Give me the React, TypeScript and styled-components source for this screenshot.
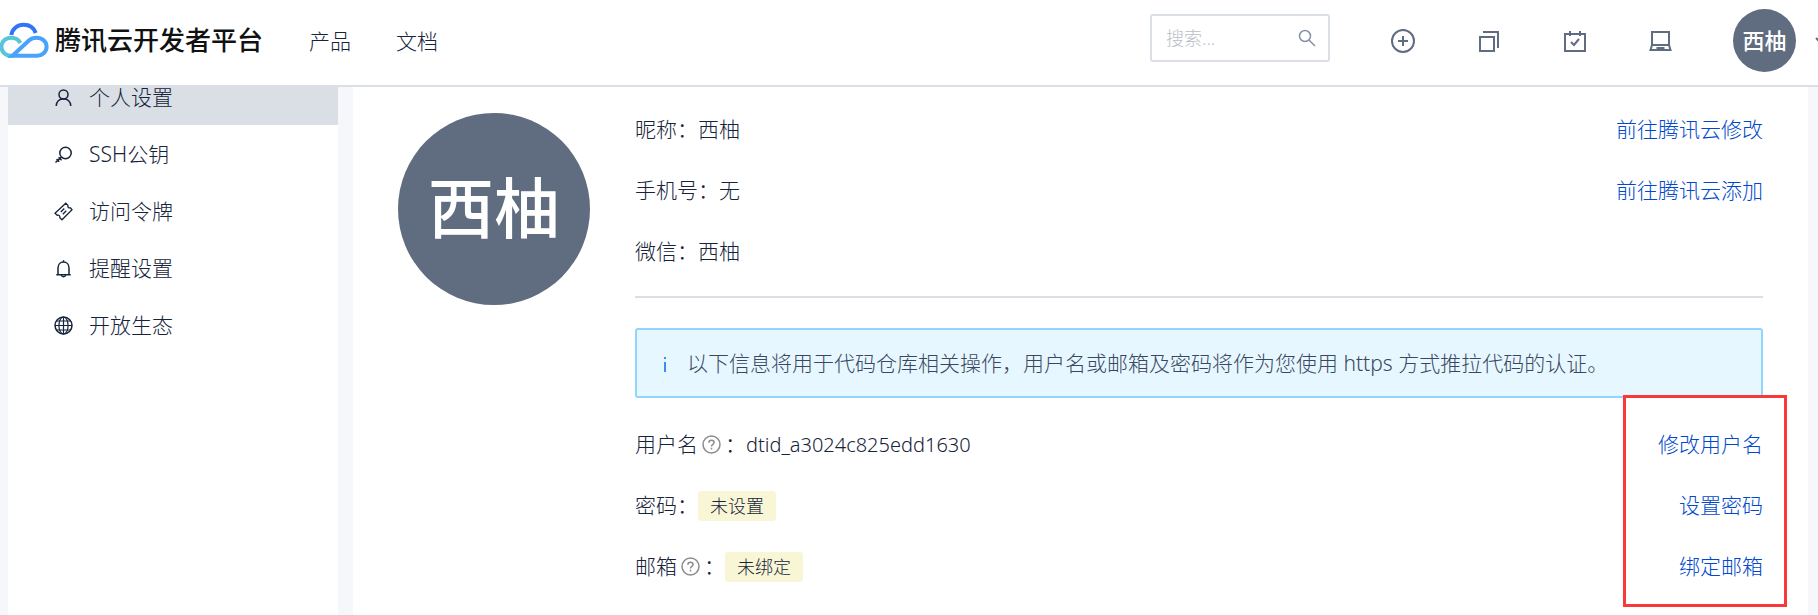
import React from 'react';
import styled, { createGlobalStyle } from 'styled-components';

const INK = '#16233a';
const SLATE = '#606c80';
const LINE = '#dadfe6';

const GlobalStyle = createGlobalStyle`
  *, *::before, *::after { box-sizing: border-box; }
  body {
    margin: 0;
    background: #f6f7fb;
    color: ${INK};
    font: 300 21px/31px "Noto Sans", "Noto Sans CJK SC", sans-serif;
    overflow-x: hidden;
  }
`;

const Header = styled.header`
  position: fixed;
  inset: 0 0 auto 0;
  z-index: 10;
  display: flex;
  align-items: center;
  height: 87px;
  padding-bottom: 4px;
  background: #fff;
  border-bottom: 2px solid ${LINE};
  overflow: hidden;
`;

const Brand = styled.a`
  display: flex;
  align-items: center;
  gap: 6px;
  color: #111;
  font-size: 26px;
  font-weight: 500;
  text-decoration: none;
  white-space: nowrap;
`;

const Nav = styled.nav`
  display: flex;
  gap: 45px;
  margin-left: 46px;
  padding-top: 2px;
`;

const NavLink = styled.a`
  color: ${INK};
  text-decoration: none;
  white-space: nowrap;
`;

const SearchBox = styled.label`
  display: flex;
  align-items: center;
  width: 180px;
  height: 48px;
  margin: 0 60px 5px auto;
  padding: 0 12px 0 14px;
  border: 2px solid ${LINE};
  border-radius: 3px;
  color: #8592a6;
`;

const SearchInput = styled.input`
  flex: 1;
  min-width: 0;
  padding: 0;
  border: 0;
  outline: 0;
  background: none;
  color: ${INK};
  font: inherit;
  font-size: 18px;
  &::placeholder { color: #b9bec8; opacity: 1; }
`;

const Tools = styled.div`
  display: flex;
  align-items: center;
  gap: 60px;
`;

const IconButton = styled.button`
  display: flex;
  padding: 0;
  border: 0;
  background: none;
  color: ${SLATE};
  cursor: pointer;
`;

const AccountButton = styled(IconButton)`
  align-items: center;
  gap: 18px;
  margin: 0 -13px 0 59px;
`;

const Avatar = styled.span<{ $size: number; $text: number }>`
  display: flex;
  flex: none;
  align-items: center;
  justify-content: center;
  width: ${p => p.$size}px;
  height: ${p => p.$size}px;
  padding-bottom: ${p => Math.round(p.$size / 20)}px;
  border-radius: 50%;
  background: ${SLATE};
  color: #fff;
  font: 500 ${p => p.$text}px/1 "Noto Sans CJK SC", sans-serif;
`;

const Page = styled.div`
  display: flex;
  align-items: stretch;
  gap: 15px;
  min-height: 100vh;
  padding: 68px 10px 0 8px;
`;

const Sidebar = styled.nav`
  flex: none;
  width: 330px;
  background: #fff;
`;

const SideLink = styled.a<{ $active?: boolean }>`
  display: flex;
  align-items: center;
  gap: 16px;
  height: 57px;
  padding: 2px 0 0 46px;
  background: ${p => (p.$active ? LINE : 'transparent')};
  color: ${INK};
  text-decoration: none;
`;

const Main = styled.main`
  display: flex;
  flex: 1;
  align-items: flex-start;
  gap: 45px;
  min-width: 0;
  padding: 45px 45px 0;
  background: #fff;
`;

const Details = styled.div`
  display: flex;
  flex: 1;
  flex-direction: column;
  gap: 30px;
  min-width: 0;
`;

const RowGroup = styled.section`
  position: relative;
  display: flex;
  flex-direction: column;
  gap: 30px;
`;

const Row = styled.div`
  display: flex;
  align-items: center;
  height: 31px;
  padding-top: 2px;
  white-space: nowrap;
`;

const RowLink = styled.a`
  margin-left: auto;
  color: #0048cc;
  text-decoration: none;
`;

const Username = styled.span`
  font-size: 20px;
`;

const HelpButton = styled(IconButton)`
  margin: 0 4px;
  color: #8c8c8c;
`;

const Tag = styled.span`
  padding: 0 12px;
  border-radius: 3px;
  background: #f9f6d6;
  font-size: 18px;
  line-height: 30px;
`;

const Divider = styled.hr`
  width: 100%;
  height: 2px;
  margin: 0;
  border: 0;
  background: ${LINE};
`;

const Notice = styled.div`
  display: flex;
  align-items: center;
  gap: 14px;
  min-height: 70px;
  padding: 0 20px;
  border: 2px solid #91d5ff;
  border-radius: 3px;
  background: #e6f7ff;
  color: #3b475f;
`;

const Highlight = styled.div`
  position: absolute;
  top: -33px;
  right: -24px;
  bottom: -26px;
  width: 164px;
  border: 3px solid #fb3838;
  pointer-events: none;
`;

type IconProps = { size: number; width?: number; children: React.ReactNode };

const Icon = ({ size, width = 1.5, children }: IconProps) => (
  <svg width={size} height={size} viewBox={`0 0 ${size} ${size}`} fill="none" stroke="currentColor" strokeWidth={width} aria-hidden="true">
    {children}
  </svg>
);

const Logo = () => (
  <svg width="49" height="37" viewBox="0 0 49 37" fill="none" strokeWidth="4" aria-hidden="true">
    <path stroke="#2f74fb" d="M11.300 13C12.300 6.600 17.500 2.700 23.700 2.700c5.800 0 10.200 3 12 8.300" />
    <path stroke="#5ac4d8" d="M20.500 21C18.500 17.500 15 15.700 11.300 15.700 5.600 15.700 1.400 19.700 1.400 24.800c0 5.200 4.300 9 9.600 9h3" />
    <path stroke="#4aa2fb" d="M12.500 33.800 29.200 18.200c2-1.900 4.600-2.500 7.300-2.500 5.700 0 10.100 4 10.100 9.100 0 5.200-4.400 9-9.600 9Z" />
  </svg>
);

const Help = () => (
  <HelpButton type="button" aria-label="帮助">
    <Icon size={19}>
      <circle cx="9.500" cy="9.500" r="8.500" />
      <path d="M6.900 7.700c0-1.600 1.100-2.500 2.600-2.500s2.600.9 2.600 2.300c0 2-2.600 1.900-2.600 4M9.500 12.800v1.600" />
    </Icon>
  </HelpButton>
);

const sideItems = [
  {
    label: '个人设置',
    icon: <><circle cx="9.500" cy="6.500" r="4.500" /><path d="M2.200 18c0-4.300 3.200-7.200 7.300-7.200s7.300 2.900 7.300 7.200" /></>,
  },
  {
    label: 'SSH公钥',
    icon: <><circle cx="11.500" cy="8" r="5.700" /><path d="M7.400 12.100 1.500 17.500M4.600 12.200l3 3M2.600 14.100l2.600 2.600" /></>,
  },
  {
    label: '访问令牌',
    icon: <path strokeWidth="1.300" d="M11.800 1.200 14 3.400c-.6 1.800.6 3 2.400 2.400l1.600 2L8 17.800l-2.200-2c.5-1.800-.8-3.100-2.600-2.500L1 11.200ZM6.800 10l3.500-3.500M8.800 12.300l3.500-3.500" />,
  },
  {
    label: '提醒设置',
    icon: <path d="M9.500 1.300V3M4 15.500V9c0-3.500 2.300-6 5.500-6s5.500 2.500 5.500 6v6.500M2.300 15.800h14.400M7.300 16c.4 2.400 4 2.400 4.400 0" />,
  },
  {
    label: '开放生态',
    icon: (
      <g strokeWidth="1.200">
        <circle cx="9.500" cy="9.500" r="8.500" strokeWidth="1.500" />
        <ellipse cx="9.500" cy="9.500" rx="4.600" ry="8.500" />
        <path d="M9.500 1v17M1 9.500h17M2.800 5h13.400M2.800 14h13.400" />
      </g>
    ),
  },
];

export default function App() {
  return (
    <>
      <GlobalStyle />
      <Header>
        <Brand href="#"><Logo />腾讯云开发者平台</Brand>
        <Nav>
          <NavLink href="#">产品</NavLink>
          <NavLink href="#">文档</NavLink>
        </Nav>
        <SearchBox>
          <SearchInput type="text" placeholder="搜索..." aria-label="搜索" />
          <Icon size={18}><circle cx="7" cy="7" r="5.500" /><path d="m11 11 6 6" /></Icon>
        </SearchBox>
        <Tools>
          <IconButton type="button" aria-label="新建">
            <Icon size={26} width={2}><circle cx="13" cy="13" r="11" /><path d="M13 8v10M8 13h10" /></Icon>
          </IconButton>
          <IconButton type="button" aria-label="项目">
            <Icon size={26} width={2}><path d="M4 9h14v14H4ZM7 4h15v16" /></Icon>
          </IconButton>
          <IconButton type="button" aria-label="任务">
            <Icon size={26} width={2}><path d="M3 6h20v17H3ZM8 3v5M18 3v5M9 14l3 3 5-6" /></Icon>
          </IconButton>
          <IconButton type="button" aria-label="工作台">
            <Icon size={26} width={2}><path d="M4 17V4h17v13M4 17l-1.500 5h20L21 17ZM9.500 22v-2h6v2" /></Icon>
          </IconButton>
        </Tools>
        <AccountButton type="button" aria-label="账户">
          <Avatar $size={63} $text={22}>西柚</Avatar>
          <Icon size={17} width={2}><path d="m2 6 6 6 6-6" /></Icon>
        </AccountButton>
      </Header>
      <Page>
        <Sidebar>
          {sideItems.map((item, i) => (
            <SideLink key={item.label} href="#" $active={i === 0}>
              <Icon size={19}>{item.icon}</Icon>
              {item.label}
            </SideLink>
          ))}
        </Sidebar>
        <Main>
          <Avatar $size={192} $text={66}>西柚</Avatar>
          <Details>
            <RowGroup>
              <Row>昵称：西柚<RowLink href="#">前往腾讯云修改</RowLink></Row>
              <Row>手机号：无<RowLink href="#">前往腾讯云添加</RowLink></Row>
              <Row>微信：西柚</Row>
            </RowGroup>
            <Divider />
            <Notice>
              <svg width="16" height="18" viewBox="0 0 16 18" fill="#3d8bf5" aria-hidden="true">
                <path d="M7 3h2v2H7ZM7 8h2v10H7Z" />
              </svg>
              <span>以下信息将用于代码仓库相关操作，用户名或邮箱及密码将作为您使用 https 方式推拉代码的认证。</span>
            </Notice>
            <RowGroup>
              <Row>用户名<Help />：<Username>dtid_a3024c825edd1630</Username><RowLink href="#">修改用户名</RowLink></Row>
              <Row>密码：<Tag>未设置</Tag><RowLink href="#">设置密码</RowLink></Row>
              <Row>邮箱<Help />：<Tag>未绑定</Tag><RowLink href="#">绑定邮箱</RowLink></Row>
              <Highlight />
            </RowGroup>
          </Details>
        </Main>
      </Page>
    </>
  );
}
